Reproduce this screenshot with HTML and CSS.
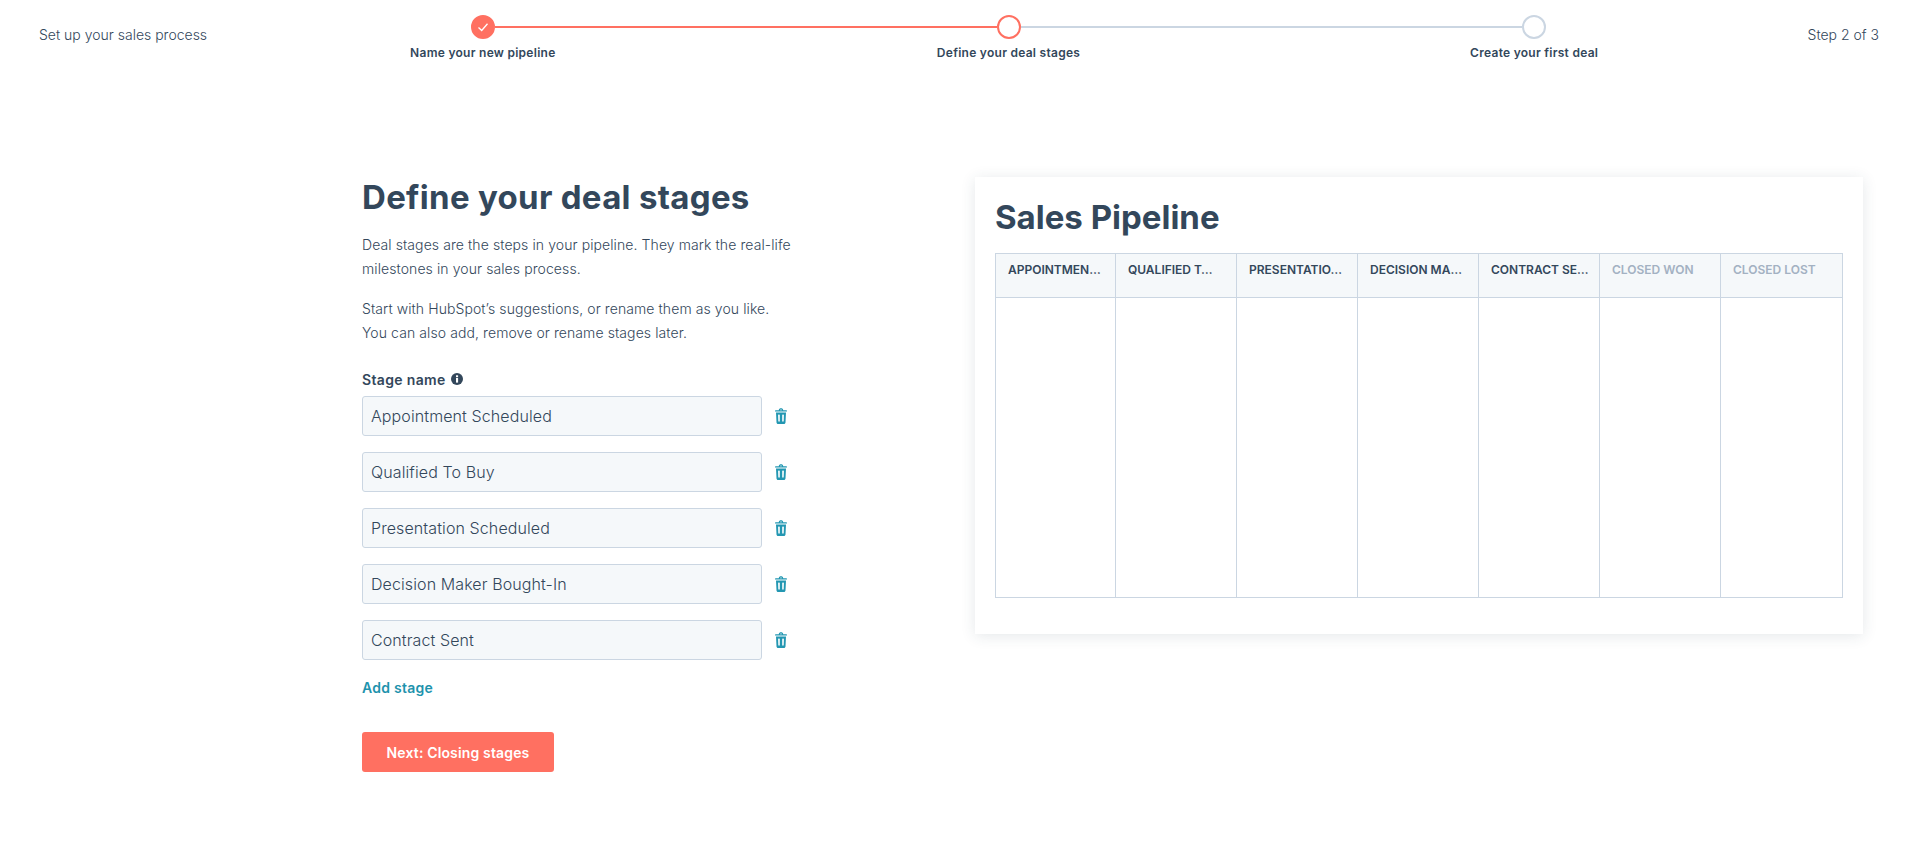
FILE: index.html
```html
<!DOCTYPE html>
<html lang="en">

<head>
  <meta charset="UTF-8">
  <meta name="viewport" content="width=device-width, initial-scale=1.0">
  <title>Define your deal stages</title>
  <link rel="stylesheet" href="styles.css">
</head>

<body>
  <header class="topbar">
    <div class="topbar-title">Set up your sales process</div>
    <ol class="stepper">
      <li class="step step-done">
        <div class="track">
          <span class="half half-none"></span>
          <span class="dot">
            <svg width="12" height="12" viewBox="0 0 12 12"><path d="M1.5 6.5 4.7 9.5 10.5 2.8" fill="none" stroke="#fff" stroke-width="1.3"/></svg>
          </span>
          <span class="half half-on"></span>
        </div>
        <div class="step-label">Name your new pipeline</div>
      </li>
      <li class="step step-current">
        <div class="track">
          <span class="half half-on"></span>
          <span class="dot"></span>
          <span class="half"></span>
        </div>
        <div class="step-label">Define your deal stages</div>
      </li>
      <li class="step">
        <div class="track">
          <span class="half"></span>
          <span class="dot"></span>
          <span class="half half-none"></span>
        </div>
        <div class="step-label">Create your first deal</div>
      </li>
    </ol>
    <div class="topbar-count">Step 2 of 3</div>
  </header>

  <main class="content">
    <section class="intro">
      <h1 class="intro-title">Define your deal stages</h1>
      <p class="intro-text">Deal stages are the steps in your pipeline. They mark the real-life<br>milestones in your sales process.</p>
      <p class="intro-text">Start with HubSpot’s suggestions, or rename them as you like.<br>You can also add, remove or rename stages later.</p>

      <div class="field-label">
        Stage name
        <svg width="12" height="12" viewBox="0 0 12 12"><circle cx="6" cy="6" r="6" fill="#33475b"/><rect x="5" y="5" width="2.1" height="4.6" fill="#fff"/><rect x="5" y="2.3" width="2.1" height="1.9" fill="#fff"/></svg>
      </div>

      <div class="stage-row">
        <input class="stage-input" type="text" value="Appointment Scheduled">
        <svg class="trash" width="12" height="16" viewBox="0 0 12 16"><path d="M3.8 2.300C3.800 -.3 8.200 -.3 8.200 2.300H11.200C11.700 2.300 12 2.700 12 3.600H0C0 2.700 .3 2.300 .8 2.300ZM5 2.300H7C7 1.300 5 1.300 5 2.300Z" fill="#2397b2" fill-rule="evenodd"/><path d="M1 4.600H11L10.500 14.500C10.400 15.400 9.800 16 9 16H3C2.200 16 1.600 15.400 1.500 14.500ZM3.700 6.500C3.300 6.500 3.100 6.800 3.100 7.100L3.300 13C3.300 13.900 4.800 13.900 4.800 13V7.100C4.800 6.800 4.500 6.500 4.200 6.500ZM7.800 6.500C7.500 6.500 7.200 6.800 7.200 7.100V13C7.200 13.900 8.700 13.900 8.700 13L8.900 7.100C8.900 6.800 8.700 6.500 8.300 6.500Z" fill="#2397b2" fill-rule="evenodd"/></svg>
      </div>
      <div class="stage-row">
        <input class="stage-input" type="text" value="Qualified To Buy">
        <svg class="trash" width="12" height="16" viewBox="0 0 12 16"><path d="M3.8 2.300C3.800 -.3 8.200 -.3 8.200 2.300H11.200C11.700 2.300 12 2.700 12 3.600H0C0 2.700 .3 2.300 .8 2.300ZM5 2.300H7C7 1.300 5 1.300 5 2.300Z" fill="#2397b2" fill-rule="evenodd"/><path d="M1 4.600H11L10.500 14.500C10.400 15.400 9.800 16 9 16H3C2.200 16 1.600 15.400 1.500 14.500ZM3.700 6.500C3.300 6.500 3.100 6.800 3.100 7.100L3.300 13C3.300 13.900 4.800 13.900 4.800 13V7.100C4.800 6.800 4.500 6.500 4.200 6.500ZM7.800 6.500C7.500 6.500 7.200 6.800 7.200 7.100V13C7.200 13.900 8.700 13.900 8.700 13L8.900 7.100C8.900 6.800 8.700 6.500 8.300 6.500Z" fill="#2397b2" fill-rule="evenodd"/></svg>
      </div>
      <div class="stage-row">
        <input class="stage-input" type="text" value="Presentation Scheduled">
        <svg class="trash" width="12" height="16" viewBox="0 0 12 16"><path d="M3.8 2.300C3.800 -.3 8.200 -.3 8.200 2.300H11.200C11.700 2.300 12 2.700 12 3.600H0C0 2.700 .3 2.300 .8 2.300ZM5 2.300H7C7 1.300 5 1.300 5 2.300Z" fill="#2397b2" fill-rule="evenodd"/><path d="M1 4.600H11L10.500 14.500C10.400 15.400 9.800 16 9 16H3C2.200 16 1.600 15.400 1.500 14.500ZM3.700 6.500C3.300 6.500 3.100 6.800 3.100 7.100L3.300 13C3.300 13.900 4.800 13.900 4.800 13V7.100C4.800 6.800 4.500 6.500 4.200 6.500ZM7.800 6.500C7.500 6.500 7.200 6.800 7.200 7.100V13C7.200 13.900 8.700 13.900 8.700 13L8.900 7.100C8.900 6.800 8.700 6.500 8.300 6.500Z" fill="#2397b2" fill-rule="evenodd"/></svg>
      </div>
      <div class="stage-row">
        <input class="stage-input" type="text" value="Decision Maker Bought-In">
        <svg class="trash" width="12" height="16" viewBox="0 0 12 16"><path d="M3.8 2.300C3.800 -.3 8.200 -.3 8.200 2.300H11.200C11.700 2.300 12 2.700 12 3.600H0C0 2.700 .3 2.300 .8 2.300ZM5 2.300H7C7 1.300 5 1.300 5 2.300Z" fill="#2397b2" fill-rule="evenodd"/><path d="M1 4.600H11L10.500 14.500C10.400 15.400 9.800 16 9 16H3C2.200 16 1.600 15.400 1.500 14.500ZM3.700 6.500C3.300 6.500 3.100 6.800 3.100 7.100L3.300 13C3.300 13.900 4.800 13.900 4.800 13V7.100C4.800 6.800 4.500 6.500 4.200 6.500ZM7.800 6.500C7.500 6.500 7.200 6.800 7.200 7.100V13C7.200 13.900 8.700 13.900 8.700 13L8.900 7.100C8.900 6.800 8.700 6.500 8.300 6.500Z" fill="#2397b2" fill-rule="evenodd"/></svg>
      </div>
      <div class="stage-row">
        <input class="stage-input" type="text" value="Contract Sent">
        <svg class="trash" width="12" height="16" viewBox="0 0 12 16"><path d="M3.8 2.300C3.800 -.3 8.200 -.3 8.200 2.300H11.200C11.700 2.300 12 2.700 12 3.600H0C0 2.700 .3 2.300 .8 2.300ZM5 2.300H7C7 1.300 5 1.300 5 2.300Z" fill="#2397b2" fill-rule="evenodd"/><path d="M1 4.600H11L10.500 14.500C10.400 15.400 9.800 16 9 16H3C2.200 16 1.600 15.400 1.500 14.500ZM3.700 6.500C3.300 6.500 3.100 6.800 3.100 7.100L3.300 13C3.300 13.900 4.800 13.900 4.800 13V7.100C4.800 6.800 4.500 6.500 4.200 6.500ZM7.800 6.500C7.500 6.500 7.200 6.800 7.200 7.100V13C7.200 13.900 8.700 13.900 8.700 13L8.900 7.100C8.900 6.800 8.700 6.500 8.300 6.500Z" fill="#2397b2" fill-rule="evenodd"/></svg>
      </div>

      <a class="add-stage" href="javascript:;">Add stage</a>
      <button class="next-btn" type="button">Next: Closing stages</button>
    </section>

    <section class="preview">
      <h2 class="preview-title">Sales Pipeline</h2>
      <table class="board">
        <tr>
          <th>APPOINTMEN…</th>
          <th>QUALIFIED T…</th>
          <th>PRESENTATIO…</th>
          <th>DECISION MA…</th>
          <th>CONTRACT SE…</th>
          <th class="closed">CLOSED WON</th>
          <th class="closed">CLOSED LOST</th>
        </tr>
        <tr>
          <td></td><td></td><td></td><td></td><td></td><td></td><td></td>
        </tr>
      </table>
    </section>
  </main>
</body>

</html>
```

FILE: styles.css
```css
* {
  box-sizing: border-box;
}

body {
  margin: 0px;
  background: #fff;
  color: #33475b;
  font-family: "Inter", "Liberation Sans", sans-serif;
  font-size: 14px;
}

/* top bar */
.topbar {
  display: grid;
  grid-template-columns: 181px 1577px 1fr;
  padding: 15px 31px 0px 39px;
  height: 145px;
}

.topbar-title,
.topbar-count {
  margin-top: 11px;
  font-size: 14px;
  line-height: 18px;
  font-weight: 300;
}

.topbar-count {
  text-align: right;
}

.stepper {
  display: flex;
  list-style: none;
  margin: 0px;
  padding: 0px;
}

.step {
  flex: 1;
  display: flex;
  flex-direction: column;
  align-items: center;
}

.track {
  display: flex;
  align-items: center;
  width: 100%;
  height: 24px;
}

.half {
  flex: 1;
  height: 2px;
  background: #cbd6e2;
}

.half-on {
  background: #ff7061;
}

.half-none {
  background: transparent;
}

.dot {
  display: flex;
  align-items: center;
  justify-content: center;
  width: 24px;
  height: 24px;
  border: 2px solid #cbd6e2;
  border-radius: 50%;
  background: #fff;
}

.step-done .dot {
  border-color: #ff7061;
  background: #ff7061;
}

.step-current .dot {
  border-color: #ff7061;
}

.step-label {
  margin-top: 6px;
  font-size: 12px;
  line-height: 16px;
  font-weight: 600;
  letter-spacing: .27px;
}

/* page content */
.content {
  display: flex;
  align-items: flex-start;
  padding: 31px 47px 0px 362px;
}

.intro {
  display: flex;
  flex-direction: column;
  align-items: flex-start;
  width: 613px;
  flex: none;
}

.intro-title {
  margin: 0px 0px 15px;
  font-size: 33px;
  line-height: 42px;
  font-weight: 700;
  letter-spacing: .3px;
}

.intro-text {
  margin: 0px 0px 16px;
  font-size: 14px;
  line-height: 24px;
  font-weight: 300;
  letter-spacing: .09px;
}

.field-label {
  display: flex;
  align-items: center;
  gap: 5px;
  margin-top: 8px;
  height: 20px;
  font-size: 14px;
  font-weight: 600;
  letter-spacing: .35px;
}

.stage-row {
  display: flex;
  align-items: center;
  gap: 13px;
  margin-top: 6px;
  margin-bottom: 10px;
}

.field-label + .stage-row {
  margin-top: 7px;
}

.stage-input {
  width: 400px;
  height: 40px;
  padding: 0px 8px;
  border: 1px solid #cbd6e2;
  border-radius: 3px;
  background: #f5f8fa;
  color: #33475b;
  font-family: inherit;
  font-size: 16px;
  font-weight: 300;
  letter-spacing: .1px;
}

.add-stage {
  margin-top: 8px;
  color: #1e93ad;
  font-size: 14px;
  line-height: 20px;
  font-weight: 600;
  letter-spacing: .25px;
  text-decoration: none;
}

.next-btn {
  margin-top: 34px;
  width: 192px;
  height: 40px;
  border: 0px;
  border-radius: 3px;
  background: #ff7061;
  color: #fff;
  font-family: inherit;
  font-size: 14px;
  font-weight: 600;
  letter-spacing: .15px;
}

/* preview card */
.preview {
  width: 888px;
  height: 457px;
  margin-top: 1px;
  padding: 19px 20px 0px;
  background: #fff;
  box-shadow: 0px 2px 14px rgba(45, 62, 80, .12);
}

.preview-title {
  margin: 0px 0px 15px;
  font-size: 33px;
  line-height: 42px;
  font-weight: 700;
}

.board {
  width: 848px;
  height: 345px;
  table-layout: fixed;
  border-collapse: collapse;
}

.board th {
  width: 121px;
  height: 44px;
  padding: 7px 12px;
  border: 1px solid #cbd6e2;
  background: #f5f8fa;
  font-size: 12px;
  line-height: 18px;
  font-weight: 600;
  text-align: left;
  vertical-align: top;
  white-space: nowrap;
  overflow: hidden;
}

.board th:first-child {
  width: 120px;
}

.board th:last-child {
  width: auto;
}

.board .closed {
  color: #a3b1c2;
}

.board td {
  border: 1px solid #cbd6e2;
}
```
